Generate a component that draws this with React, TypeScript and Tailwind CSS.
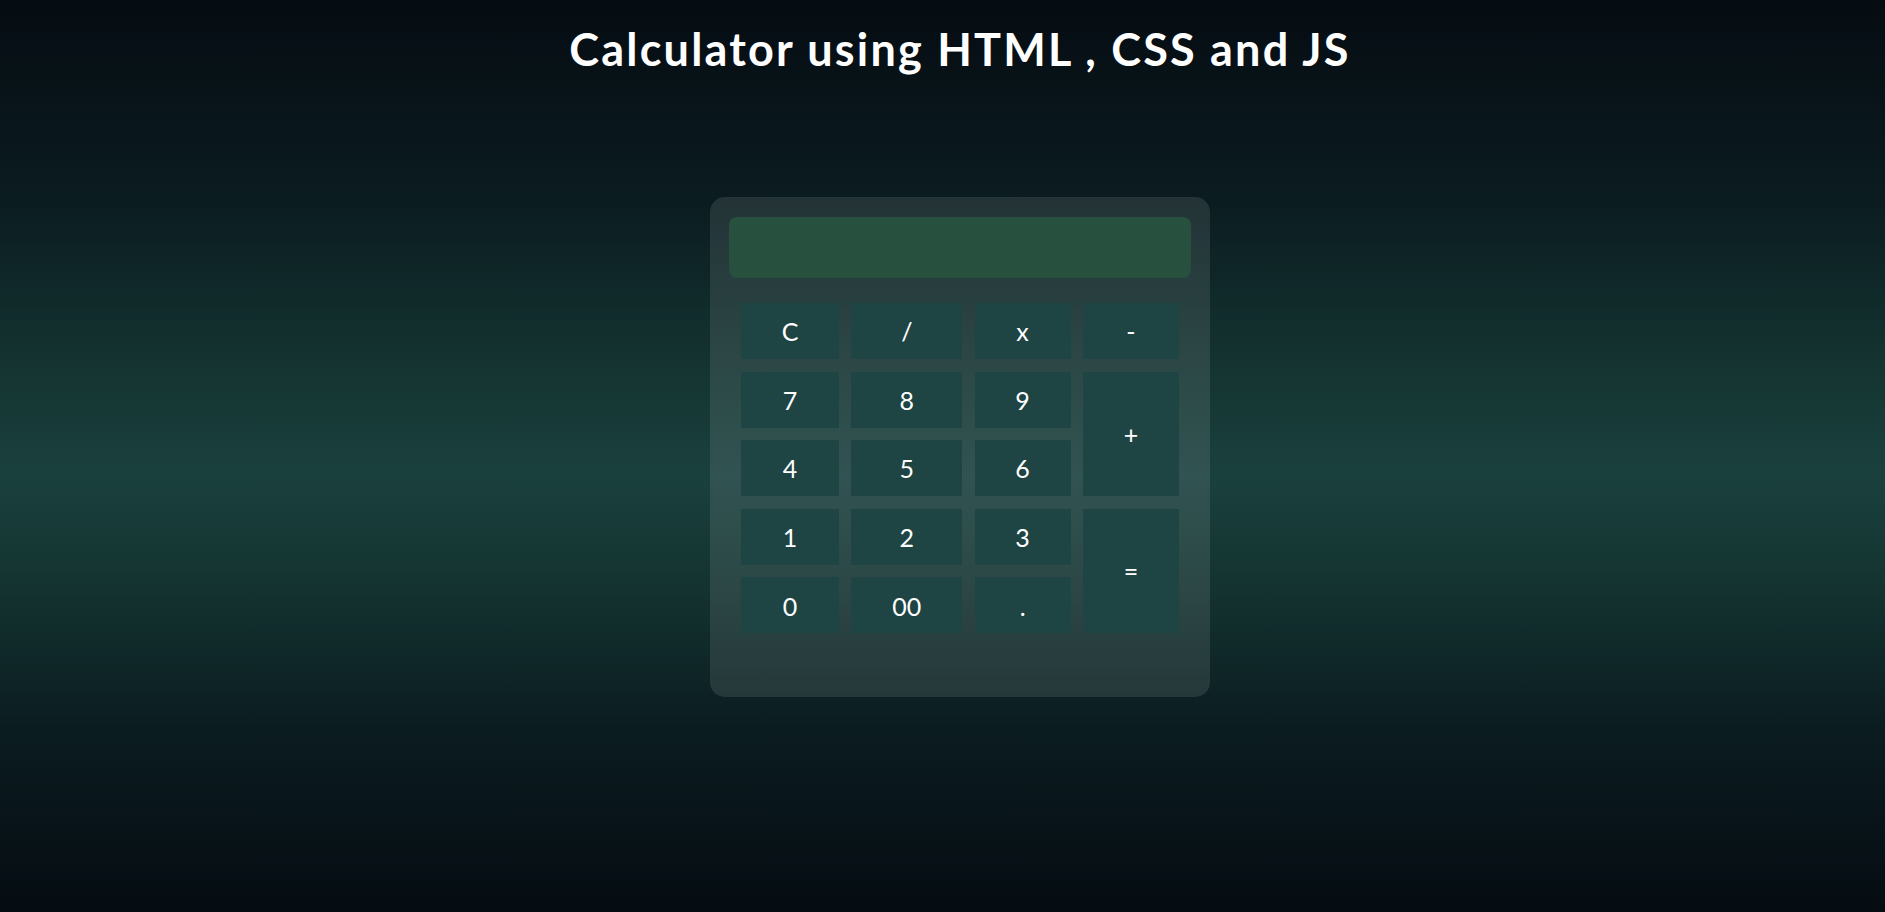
import React from "react";

const keys: { label: string; span?: boolean }[] = [
  { label: "C" },
  { label: "/" },
  { label: "x" },
  { label: "-" },
  { label: "7" },
  { label: "8" },
  { label: "9" },
  { label: "+", span: true },
  { label: "4" },
  { label: "5" },
  { label: "6" },
  { label: "1" },
  { label: "2" },
  { label: "3" },
  { label: "=", span: true },
  { label: "0" },
  { label: "00" },
  { label: "." },
];

export default function App() {
  return (
    <div
      className="w-full h-[912px] overflow-hidden flex flex-col items-center pl-[35px] text-white bg-[linear-gradient(to_bottom,#050c12_0%,#0b1c20_22%,#153633_42%,#1a403e_52%,#153633_62%,#0b1c20_80%,#050c12_100%)]"
      style={{ fontFamily: "Lato, 'Noto Sans', sans-serif" }}
    >
      {/* Title */}
      <h1 className="mt-[27px] text-[45px] leading-none font-bold tracking-[2.2px]">
        Calculator using HTML , CSS and JS
      </h1>

      {/* Calculator */}
      <div className="mt-[125px] w-[500px] h-[500px] rounded-[15px] bg-white/10 pt-[20px] pl-[19px]">
        <div className="w-[462px] h-[61px] rounded-[8px] bg-[#28503f]" />

        <div className="mt-[25px] ml-[12px] grid grid-cols-[98px_111px_96px_96px] auto-rows-[56px] gap-x-[12.3px] gap-y-[12.6px]">
          {keys.map((k) => (
            <button
              key={k.label}
              className={
                "flex items-center justify-center pt-[2px] bg-[#1f4444] text-[25px] text-white font-normal" +
                (k.span ? " row-span-2" : "")
              }
            >
              {k.label}
            </button>
          ))}
        </div>
      </div>
    </div>
  );
}
